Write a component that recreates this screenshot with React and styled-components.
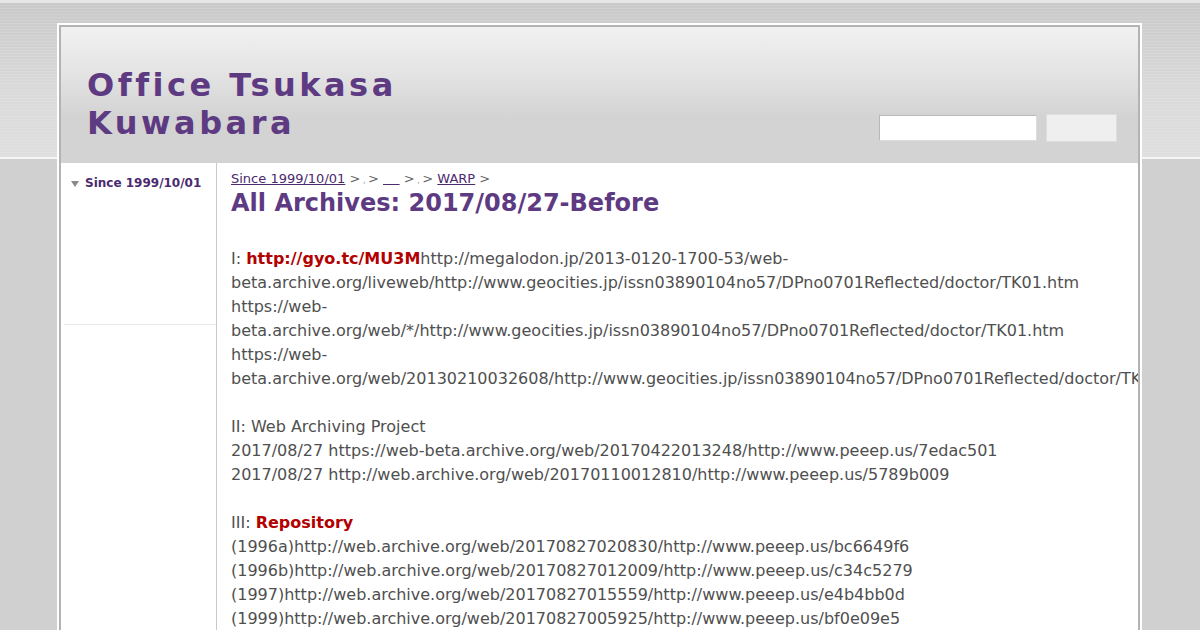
import React from "react";
import styled, { createGlobalStyle } from "styled-components";

const Global = createGlobalStyle`
  html, body { margin: 0; padding: 0; }
  body {
    font-family: "DejaVu Sans", Verdana, sans-serif;
    background-color: #d0d0d0;
    background-image:
      linear-gradient(#e6e6e6, #e6e6e6),
      linear-gradient(#f6f6f6, #f6f6f6),
      repeating-linear-gradient(to bottom, rgba(255,255,255,0.0) 0px, rgba(255,255,255,0.0) 2px, rgba(255,255,255,0.12) 2px, rgba(255,255,255,0.12) 3px),
      linear-gradient(to bottom, #c9c9c9 0px, #cfcfcf 30px, #dadada 90px, #dedede 156px);
    background-size: 100% 3px, 100% 2px, 100% 155px, 100% 155px;
    background-position: 0 0, 0 157px, 0 3px, 0 3px;
    background-repeat: no-repeat;
    padding: 23px 0 40px;
  }
`;

const Frame = styled.div`
  width: 1085px;
  margin: 0 0 0 57px;
  box-sizing: border-box;
  border: 2px solid #ffffff;
`;

const Inner = styled.div`
  border: 2px solid #b3b3b3;
  background: #ffffff;
  min-height: 700px;
`;

const Header = styled.header`
  height: 136px;
  box-sizing: border-box;
  display: flex;
  justify-content: space-between;
  align-items: flex-end;
  padding: 38px 21px 21px 26px;
  background: linear-gradient(to bottom, #f1f1f1 0px, #e4e4e4 45px, #d3d3d3 90px, #d3d3d3 136px);
`;

const SiteTitle = styled.h1`
  margin: 0;
  width: 370px;
  font-size: 32px;
  line-height: 38px;
  font-weight: bold;
  letter-spacing: 3.5px;
  color: #5d3a82;
`;

const SearchForm = styled.form`
  display: flex;
  align-items: center;
  gap: 9px;
`;

const SearchInput = styled.input`
  width: 158px;
  height: 26px;
  box-sizing: border-box;
  border: 1px solid #b8b8b8;
  border-bottom-color: #dcdcdc;
  border-right-color: #dcdcdc;
  background: #ffffff;
  margin: 0;
`;

const SearchButton = styled.button`
  width: 71px;
  height: 28px;
  box-sizing: border-box;
  border: 1px solid #dedede;
  background: #efefef;
  margin: 0;
`;

const Body = styled.div`
  display: flex;
  align-items: stretch;
`;

const Sidebar = styled.aside`
  width: 156px;
  flex: 0 0 156px;
  box-sizing: border-box;
  border-right: 1px solid #c9c9c9;
  min-height: 560px;
`;

const SideBlock = styled.div`
  margin-left: 3px;
  height: 162px;
  box-sizing: border-box;
  border-bottom: 1px solid #e9e9e9;
  padding: 12px 0 0 7px;
`;

const SideItem = styled.div`
  display: flex;
  align-items: center;
  gap: 6px;
  font-size: 12px;
  font-weight: bold;
  line-height: 16px;
  color: #4b2a6e;
`;

const Tri = styled.span`
  width: 0;
  height: 0;
  border-left: 4.5px solid transparent;
  border-right: 4.5px solid transparent;
  border-top: 6px solid #8a8a8a;
  margin-top: 1px;
`;

const Main = styled.main`
  flex: 1;
  min-width: 0;
  overflow: hidden;
  padding: 8px 2px 0 14px;
  color: #4f4f4f;
`;

const Crumbs = styled.div`
  font-size: 13px;
  line-height: 16px;
  color: #666666;
`;

const CrumbLink = styled.a`
  color: #4b2a6e;
  text-decoration: underline;
`;

const Comma = styled.span`
  font-size: 8px;
  color: #999999;
`;

const PageTitle = styled.h2`
  margin: -1px 0 0;
  font-size: 24px;
  line-height: 30px;
  font-weight: bold;
  color: #5d3a82;
`;

const Section = styled.p`
  margin: ${(p) => (p.$first ? "29px" : "24px")} 0 0;
  font-size: 16px;
  line-height: 24px;
`;

const RedLink = styled.a`
  color: #b30000;
  font-weight: bold;
  text-decoration: none;
`;

const Line = styled.span`
  display: block;
`;

export default function App() {
  return (
    <>
      <Global />
      <Frame>
        <Inner>
          <Header>
            <SiteTitle>Office Tsukasa Kuwabara</SiteTitle>
            <SearchForm onSubmit={(e) => e.preventDefault()}>
              <SearchInput type="text" />
              <SearchButton type="submit" />
            </SearchForm>
          </Header>
          <Body>
            <Sidebar>
              <SideBlock>
                <SideItem>
                  <Tri />
                  Since 1999/10/01
                </SideItem>
              </SideBlock>
            </Sidebar>
            <Main>
              <Crumbs>
                <CrumbLink href="#">Since 1999/10/01</CrumbLink> &gt;<Comma> , </Comma>&gt;{" "}
                <CrumbLink href="#">{"\u00a0\u00a0\u00a0\u00a0"}</CrumbLink> &gt;<Comma> , </Comma>&gt;{" "}
                <CrumbLink href="#">WARP</CrumbLink> &gt;
              </Crumbs>
              <PageTitle>All Archives: 2017/08/27-Before</PageTitle>
              <Section $first>
                <Line>
                  I: <RedLink href="#">http://gyo.tc/MU3M</RedLink>
                  http://megalodon.jp/2013-0120-1700-53/web-beta.archive.org/liveweb/http://www.geocities.jp/issn03890104no57/DPno0701Reflected/doctor/TK01.htm
                </Line>
                <Line>https://web-beta.archive.org/web/*/http://www.geocities.jp/issn03890104no57/DPno0701Reflected/doctor/TK01.htm</Line>
                <Line>https://web-beta.archive.org/web/20130210032608/http://www.geocities.jp/issn03890104no57/DPno0701Reflected/doctor/TK01.htm</Line>
              </Section>
              <Section>
                <Line>II: Web Archiving Project</Line>
                <Line>2017/08/27 https://web-beta.archive.org/web/20170422013248/http://www.peeep.us/7edac501</Line>
                <Line>2017/08/27 http://web.archive.org/web/20170110012810/http://www.peeep.us/5789b009</Line>
              </Section>
              <Section>
                <Line>
                  III: <RedLink href="#">Repository</RedLink>
                </Line>
                <Line>(1996a)http://web.archive.org/web/20170827020830/http://www.peeep.us/bc6649f6</Line>
                <Line>(1996b)http://web.archive.org/web/20170827012009/http://www.peeep.us/c34c5279</Line>
                <Line>(1997)http://web.archive.org/web/20170827015559/http://www.peeep.us/e4b4bb0d</Line>
                <Line>(1999)http://web.archive.org/web/20170827005925/http://www.peeep.us/bf0e09e5</Line>
              </Section>
            </Main>
          </Body>
        </Inner>
      </Frame>
    </>
  );
}
